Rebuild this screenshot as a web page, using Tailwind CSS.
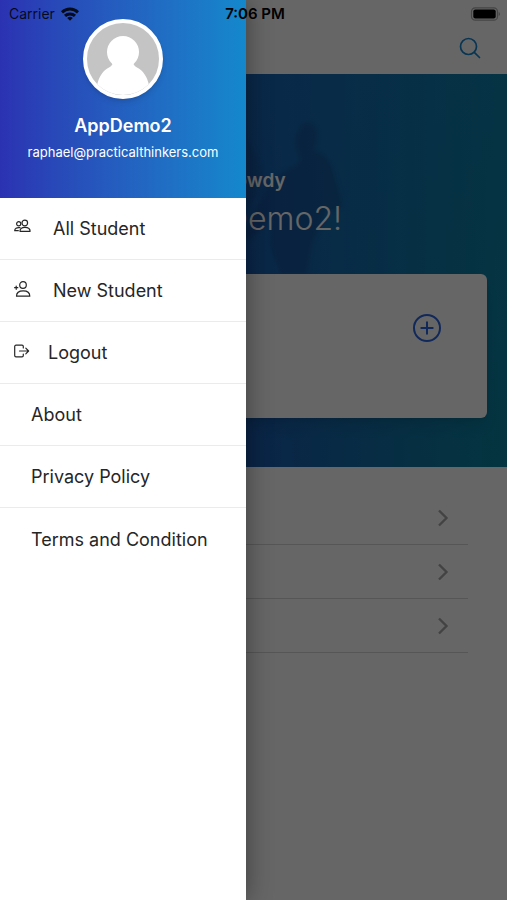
<!DOCTYPE html>
<html lang="en">
<head>
<meta charset="utf-8">
<meta name="viewport" content="width=device-width, initial-scale=1">
<title>AppDemo2</title>
<script src="https://cdn.jsdelivr.net/npm/@tailwindcss/browser@4"></script>
</head>
<body class="relative min-h-screen overflow-x-hidden bg-white font-['Inter',sans-serif]">

<!-- Home screen -->
<main class="min-h-screen">
  <header class="flex h-[74px] items-end justify-end px-[25px] pb-[14px]">
    <button type="button" aria-label="Search" class="text-[#1584cc]">
      <svg class="size-6" viewBox="0 0 24 24" fill="none" stroke="currentColor" stroke-width="1.7" stroke-linecap="round"><circle cx="10.5" cy="10.5" r="8"/><path d="M16.3 16.3l5.2 5.2"/></svg>
    </button>
  </header>

  <section class="relative bg-linear-to-r from-[#2a2fb4] via-[#1a5cb0] via-50% to-[#0c84a0] px-5 pt-[93px] pb-[49px]">
    <div class="absolute inset-0 bg-linear-to-b from-[#1478c4]/30 to-transparent"></div>
    <svg class="absolute top-[45px] left-[240px] h-[155px] w-[110px] blur-[2px]" viewBox="0 0 110 155" fill="#14306c" aria-hidden="true">
      <path opacity=".28" d="M61 6c6-5 15-2 16 8 1 8-2 12-3 17 9 4 15 8 18 17l9 30c2 7-1 14-7 13l-9 1c-2 13-8 21-12 31-4 12-4 24-7 38H42c-2-12-8-21-10-32-2-12 1-24-1-36-6 14-15 25-24 28l-6-5c10-12 15-25 21-40 5-14 17-22 32-28 4-3 6-5 6-9-4-9-6-20-1-27z"/>
      <path opacity=".15" d="M6 20c6 4 10 14 14 23 4 12 3 21 0 31L6 88z"/>
    </svg>
    <div class="relative text-center text-white">
      <p class="text-[19px] leading-7 font-semibold">Howdy</p>
      <h1 class="mt-1 text-[32px] leading-10 font-light">AppDemo2!</h1>
    </div>
    <div class="relative mt-[35px] flex h-36 justify-end rounded-md bg-white pt-[38px] pr-11 shadow-lg">
      <button type="button" aria-label="Add" class="size-8 text-[#2b66e2]">
        <svg class="size-8" viewBox="0 0 32 32" fill="none" stroke="currentColor" stroke-width="2" stroke-linecap="round"><circle cx="16" cy="16" r="13"/><path d="M16 10.3v11.4M10.3 16h11.4"/></svg>
      </button>
    </div>
  </section>

  <ul class="px-[39px] pt-6">
    <li class="border-b border-[#d8d8d8]"><a href="#" aria-label="First item" class="flex h-[53px] items-center justify-end pr-4 text-[#a8a8a8]"><svg class="h-[18px] w-[18px]" viewBox="0 0 18 18" fill="none" stroke="currentColor" stroke-width="2.400"><path d="M5 1.500l7.500 7.500-7.500 7.500"/></svg></a></li>
    <li class="border-b border-[#d8d8d8]"><a href="#" aria-label="Second item" class="flex h-[53px] items-center justify-end pr-4 text-[#a8a8a8]"><svg class="h-[18px] w-[18px]" viewBox="0 0 18 18" fill="none" stroke="currentColor" stroke-width="2.400"><path d="M5 1.500l7.500 7.500-7.500 7.500"/></svg></a></li>
    <li class="border-b border-[#d8d8d8]"><a href="#" aria-label="Third item" class="flex h-[53px] items-center justify-end pr-4 text-[#a8a8a8]"><svg class="h-[18px] w-[18px]" viewBox="0 0 18 18" fill="none" stroke="currentColor" stroke-width="2.400"><path d="M5 1.500l7.500 7.500-7.500 7.500"/></svg></a></li>
  </ul>
</main>

<div class="absolute inset-0 bg-black/60"></div>

<!-- Side drawer -->
<aside class="absolute inset-y-0 left-0 w-[246px] bg-white shadow-[0_0_24px_rgba(0,0,0,0.4)]">
  <div class="flex flex-col items-center bg-linear-to-r from-[#2b32b2] to-[#1488cc] pt-[19px] pb-[34px] text-white">
    <svg class="size-20 rounded-full border-4 border-white bg-[#c4c4c4] shadow-md" viewBox="0 0 72 72" fill="#fff" role="img" aria-label="Profile picture">
      <circle cx="36" cy="29" r="16"/>
      <path d="M26 38h20c0 3 1 5 4 6.500 6 3 10 9 12 17.500v10H10v-10c2-8.500 6-14.500 12-17.500 3-1.500 4-3.500 4-6.500z"/>
    </svg>
    <h2 class="mt-[13px] text-[18px] leading-7 font-semibold">AppDemo2</h2>
    <p class="text-[13px] leading-6">raphael@practicalthinkers.com</p>
  </div>
  <nav class="text-[18px] text-[#262626]">
    <a href="#" class="flex h-[62px] items-center gap-[22px] border-b border-[#ebebeb] pl-[14px]">
      <svg class="h-5 w-[17px] pb-1" viewBox="0 0 17 16" fill="none" stroke="currentColor" stroke-width="1.200" stroke-linejoin="round" stroke-linecap="round" aria-hidden="true"><circle cx="10.800" cy="4" r="2.800"/><path d="M6 12.300c0-2.700 2-4 4.900-4s5.200 1.300 5.200 4z"/><circle cx="4.700" cy="4.800" r="2.100"/><path d="M6 8.700C2.600 8.300.7 9.500.7 11.700h3.600"/></svg>
      All Student
    </a>
    <a href="#" class="flex h-[62px] items-center gap-[22px] border-b border-[#ebebeb] pl-[14px]">
      <svg class="h-5 w-[17px] pb-1" viewBox="0 0 17 16" fill="none" stroke="currentColor" stroke-width="1.200" stroke-linejoin="round" stroke-linecap="round" aria-hidden="true"><circle cx="9" cy="4" r="3.300"/><path d="M2.500 15.200c0-3.600 2.700-5.300 6.700-5.300s6.600 1.700 6.600 5.300z"/><path d="M.6 6.700h3.200M2.200 5.100v3.200"/></svg>
      New Student
    </a>
    <a href="#" class="flex h-[62px] items-center gap-[18px] border-b border-[#ebebeb] pl-[14px]">
      <svg class="h-5 w-4 pb-1" viewBox="0 0 16 16" fill="none" stroke="currentColor" stroke-width="1.200" stroke-linejoin="round" stroke-linecap="round" aria-hidden="true"><path d="M9.300 5V3.500a1.300 1.300 0 0 0-1.300-1.300H2A1.300 1.300 0 0 0 .7 3.500v9A1.300 1.300 0 0 0 2 13.800h6a1.300 1.300 0 0 0 1.300-1.300V11M5.500 8h9M11.800 5.200L14.600 8l-2.800 2.800"/></svg>
      Logout
    </a>
    <a href="#" class="flex h-[62px] items-center border-b border-[#ebebeb] pl-[31px]">About</a>
    <a href="#" class="flex h-[62px] items-center border-b border-[#ebebeb] pl-[31px]">Privacy Policy</a>
    <a href="#" class="flex h-[62px] items-center pl-[31px]">Terms and Condition</a>
  </nav>
</aside>

<!-- System status bar -->
<div class="absolute inset-x-0 top-0 grid h-7 grid-cols-3 items-center pr-[6px] pl-[9px] text-[14px] leading-5 text-black/85">
  <div class="flex items-center gap-[6px]">
    <span>Carrier</span>
    <svg class="h-[14px] w-[18px]" viewBox="0 0 18 14" fill="none" stroke="currentColor" stroke-width="3" aria-label="Wi-Fi" role="img"><path d="M1 5.300a11.500 11.500 0 0 1 16 0M4 8.900a7.200 7.200 0 0 1 10 0"/><path d="M9 13.700L6.200 11a4 4 0 0 1 5.600 0z" fill="currentColor" stroke="none"/></svg>
  </div>
  <div class="text-center text-[15px] font-semibold text-black">7:06 PM</div>
  <div class="flex justify-end">
    <svg class="h-[14px] w-[31px]" viewBox="0 0 31 14" aria-label="Battery full" role="img"><rect x="1.500" y=".8" width="26" height="12.400" rx="3.800" fill="none" stroke="#454545" stroke-width="1.200"/><rect x="3.300" y="2.500" width="22.400" height="9" rx="2" fill="#000"/><path d="M28.700 5v4c1.700-.6 1.700-3.400 0-4z" fill="#454545"/></svg>
  </div>
</div>
</body>
</html>
